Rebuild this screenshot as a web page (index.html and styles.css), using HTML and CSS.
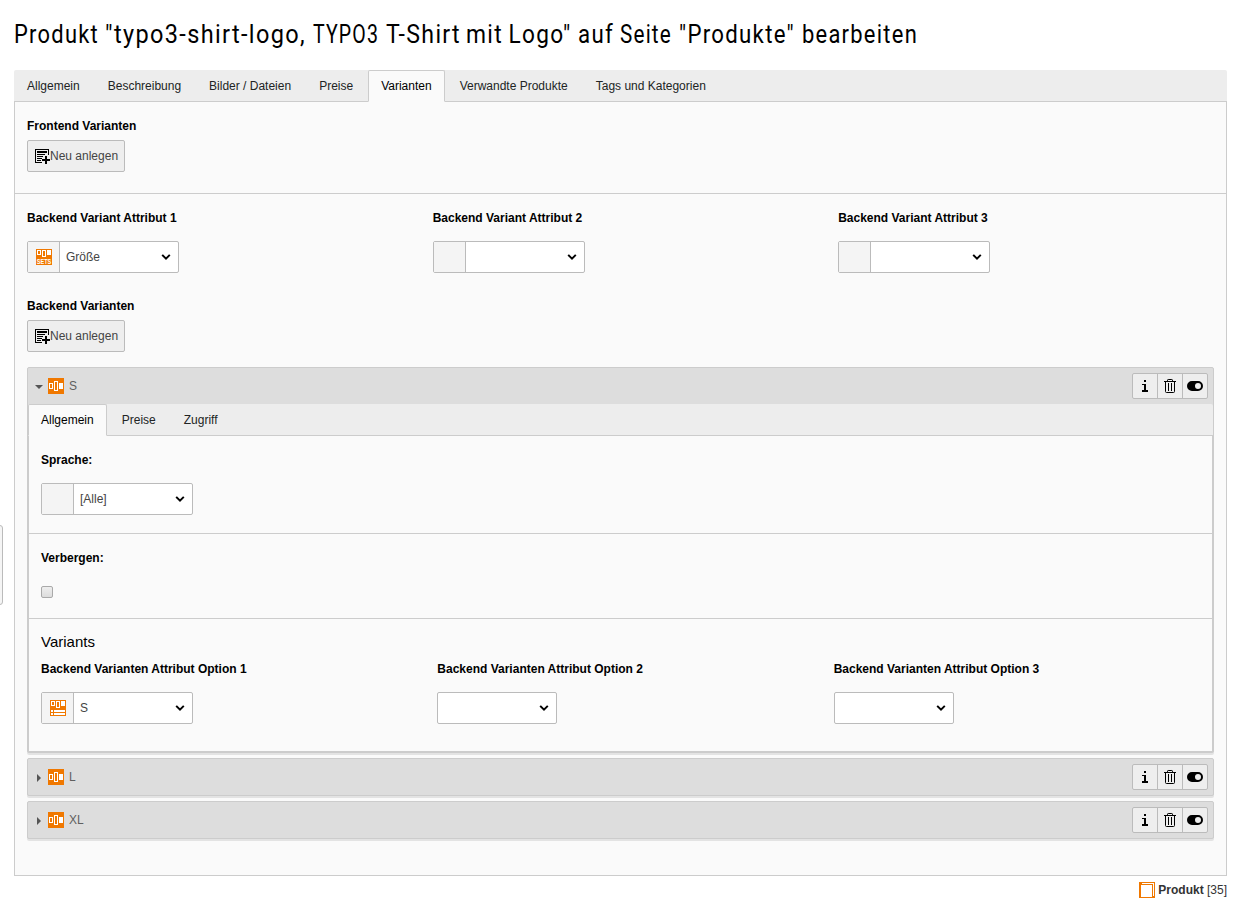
FILE: index.html
```html
<!DOCTYPE html>
<html lang="de">
<head>
<meta charset="utf-8">
<title>Produkt bearbeiten</title>
<link rel="stylesheet" href="styles.css">
</head>
<body>
<svg class="defs" width="0" height="0">
  <symbol id="new" viewBox="0 0 16 16" shape-rendering="crispEdges">
    <path d="M1 1h14v6h-1V2H2v12h6v1H1z"/>
    <path d="M3 3h10v2H3zM3 6h8v1H3zM3 8h6v1H3zM3 10h5v1H3zM3 12h4v1H3z"/>
    <path d="M11 8h2v3h3v2h-3v3h-2v-3H8v-2h3z"/>
  </symbol>
  <symbol id="variant" viewBox="0 0 16 16" shape-rendering="crispEdges">
    <path fill="#f07800" d="M0 0h16v16H0z"/>
    <path fill="#fff" fill-rule="evenodd" d="M1 5h4v6H1zM2 6v4h2V6zM6 3h4v10H6zM7 4v8h2V4zM11 5h4v6h-4z"/>
  </symbol>
  <symbol id="sets" viewBox="0 0 16 16">
    <path fill="#f07800" d="M0 0h16v16H0z"/>
    <path fill="#fff" fill-rule="evenodd" shape-rendering="crispEdges" d="M1 1h4v5H1zM2 2v3h2V2zM6 1h4v7H6zM7 2v5h2V2zM11 1h4v5h-4z"/>
    <text x="0.800" y="15" textLength="14.400" lengthAdjust="spacingAndGlyphs" class="sets-text">SETS</text>
  </symbol>
  <symbol id="option" viewBox="0 0 16 16" shape-rendering="crispEdges">
    <path fill="#f07800" d="M0 0h16v16H0z"/>
    <path fill="#fff" fill-rule="evenodd" d="M1 1h4v5H1zM2 2v3h2V2zM6 1h4v7H6zM7 2v5h2V2zM11 1h4v5h-4zM1 10h2v2H1zM4 10h11v2H4zM1 13h2v2H1zM4 13h11v2H4z"/>
  </symbol>
  <symbol id="info" viewBox="0 0 16 16" shape-rendering="crispEdges">
    <path d="M7 2h2v2H7zM6 6h3v6h2v2H5v-2h2V7H5V6z"/>
  </symbol>
  <symbol id="trash" viewBox="0 0 16 16">
    <path fill="none" stroke="#000" d="M2 3.5h12M5.5 3V2.2q0-.7.7-.7h3.6q.7 0 .7.7V3M3.500 4v9.500q0 1 1 1h7q1 0 1-1V4M6.500 5v8M9.500 5v8"/>
  </symbol>
  <symbol id="toggle" viewBox="0 0 16 16">
    <path fill-rule="evenodd" d="M5 3h6a5 5 0 0 1 0 10H5A5 5 0 0 1 5 3zm6 2a3 3 0 1 0 0 6 3 3 0 0 0 0-6z"/>
  </symbol>
  <symbol id="arrow" viewBox="0 0 10 8">
    <path fill="none" stroke="#000" stroke-width="2" d="M1.200 1.900 5 5.600 8.800 1.900"/>
  </symbol>
</svg>

<div class="handle"></div>

<h1 class="title">
  <svg class="title-svg" width="920" height="40">
    <text y="29" x="0" textLength="85" lengthAdjust="spacingAndGlyphs">Produkt</text>
    <text y="29" x="91" textLength="201" lengthAdjust="spacingAndGlyphs">"typo3-shirt-logo,</text>
    <text y="29" x="299" textLength="66" lengthAdjust="spacingAndGlyphs">TYPO3</text>
    <text y="29" x="372" textLength="75" lengthAdjust="spacingAndGlyphs">T-Shirt</text>
    <text y="29" x="452" textLength="37" lengthAdjust="spacingAndGlyphs">mit</text>
    <text y="29" x="494.500" textLength="63" lengthAdjust="spacingAndGlyphs">Logo"</text>
    <text y="29" x="564" textLength="36" lengthAdjust="spacingAndGlyphs">auf</text>
    <text y="29" x="606" textLength="52" lengthAdjust="spacingAndGlyphs">Seite</text>
    <text y="29" x="665" textLength="116" lengthAdjust="spacingAndGlyphs">"Produkte"</text>
    <text y="29" x="788" textLength="116" lengthAdjust="spacingAndGlyphs">bearbeiten</text>
  </svg>
</h1>

<nav class="tabs">
  <a class="tab">Allgemein</a><a class="tab">Beschreibung</a><a class="tab">Bilder / Dateien</a><a class="tab">Preise</a><a class="tab active">Varianten</a><a class="tab">Verwandte Produkte</a><a class="tab">Tags und Kategorien</a>
</nav>
<main class="pane outer">
  <section class="section frontend">
    <div class="label">Frontend Varianten</div>
    <button class="btn"><svg class="icon"><use href="#new"/></svg>Neu anlegen</button>
  </section>
  <section class="section">
    <div class="columns">
      <div><div class="label">Backend Variant Attribut 1</div>
        <div class="select"><span class="addon"><svg class="icon"><use href="#sets"/></svg></span><span class="value">Größe<svg class="arrow"><use href="#arrow"/></svg></span></div></div>
      <div><div class="label">Backend Variant Attribut 2</div>
        <div class="select"><span class="addon"></span><span class="value"><svg class="arrow"><use href="#arrow"/></svg></span></div></div>
      <div><div class="label">Backend Variant Attribut 3</div>
        <div class="select"><span class="addon"></span><span class="value"><svg class="arrow"><use href="#arrow"/></svg></span></div></div>
    </div>
    <div class="label backend">Backend Varianten</div>
    <button class="btn"><svg class="icon"><use href="#new"/></svg>Neu anlegen</button>

    <div class="panels">
      <article class="panel">
        <header class="panel-head"><i class="caret open"></i><svg class="icon"><use href="#variant"/></svg><span class="name">S</span>
          <div class="actions"><a><svg class="icon"><use href="#info"/></svg></a><a><svg class="icon"><use href="#trash"/></svg></a><a><svg class="icon"><use href="#toggle"/></svg></a></div></header>
        <nav class="tabs"><a class="tab active">Allgemein</a><a class="tab">Preise</a><a class="tab">Zugriff</a></nav>
        <div class="pane inner">
          <div class="section language">
            <div class="label">Sprache:</div>
            <div class="select"><span class="addon"></span><span class="value">[Alle]<svg class="arrow"><use href="#arrow"/></svg></span></div>
          </div>
          <div class="section hide">
            <div class="label">Verbergen:</div>
            <span class="checkbox"></span>
          </div>
          <div class="section variants">
            <h4 class="subtitle">Variants</h4>
            <div class="columns narrow">
              <div><div class="label">Backend Varianten Attribut Option 1</div>
                <div class="select"><span class="addon"><svg class="icon"><use href="#option"/></svg></span><span class="value">S<svg class="arrow"><use href="#arrow"/></svg></span></div></div>
              <div><div class="label">Backend Varianten Attribut Option 2</div>
                <div class="select plain"><span class="value"><svg class="arrow"><use href="#arrow"/></svg></span></div></div>
              <div><div class="label">Backend Varianten Attribut Option 3</div>
                <div class="select plain"><span class="value"><svg class="arrow"><use href="#arrow"/></svg></span></div></div>
            </div>
          </div>
        </div>
      </article>
      <article class="panel">
        <header class="panel-head"><i class="caret"></i><svg class="icon"><use href="#variant"/></svg><span class="name">L</span>
          <div class="actions"><a><svg class="icon"><use href="#info"/></svg></a><a><svg class="icon"><use href="#trash"/></svg></a><a><svg class="icon"><use href="#toggle"/></svg></a></div></header>
      </article>
      <article class="panel">
        <header class="panel-head"><i class="caret"></i><svg class="icon"><use href="#variant"/></svg><span class="name">XL</span>
          <div class="actions"><a><svg class="icon"><use href="#info"/></svg></a><a><svg class="icon"><use href="#trash"/></svg></a><a><svg class="icon"><use href="#toggle"/></svg></a></div></header>
      </article>
    </div>
  </section>
</main>
<footer class="footer">
  <svg class="icon" viewBox="0 0 16 16" shape-rendering="crispEdges"><path fill="#f07800" d="M0 0h16v16H0z"/><path fill="#fff" d="M2 3h11v12H2zM3 1h12v1H3zM14 2h1v12h-1z"/></svg>
  <span><b>Produkt</b> [35]</span>
</footer>
</body>
</html>
```
FILE: styles.css
```css
* { box-sizing: border-box; }
body {
  margin: 0;
  padding: 14px 13px 0 14px;
  height: 909px;
  overflow: hidden;
  background: #fff;
  color: #212424;
  font: 12px/18px "Liberation Sans", Arial, sans-serif;
}
.defs { position: absolute; }
.handle {
  position: absolute;
  left: -10px;
  top: 525px;
  width: 13px;
  height: 80px;
  border: 1px solid #bbb;
  border-radius: 3px;
  background: #f5f5f5;
}
.title { margin: 0; height: 56px; font-weight: 400; }
.title-svg { display: block; overflow: visible; }
.title-svg text { font: 26px Roboto, sans-serif; letter-spacing: 1.5px; fill: #000; }
.icon { display: block; flex: none; width: 16px; height: 16px; }
.sets-text { font: bold 7.5px "Liberation Sans", sans-serif; fill: #fff; }

.tabs {
  display: flex;
  height: 32px;
  background: #ededed;
  border-bottom: 1px solid #ccc;
  border-radius: 2px 2px 0 0;
}
.tab {
  height: 32px;
  margin-right: 2px;
  padding: 6px 12px;
  border: 1px solid transparent;
  white-space: nowrap;
}
.tab.active {
  background: #fafafa;
  border-color: #ccc #ccc #fafafa;
  border-radius: 2px 2px 0 0;
  color: #000;
}
.pane { background: #fafafa; border: 1px solid #ccc; border-top: 0; }
.outer { height: 774px; }
.section { padding: 15px 12px 0; }
.section + .section { border-top: 1px solid #ccc; }
.frontend { height: 91px; }
.label { font-weight: 700; color: #000; margin-bottom: 5px; }
.btn {
  display: flex;
  align-items: center;
  width: 98px;
  height: 32px;
  padding: 0 0 0 6px;
  margin: 0;
  border: 1px solid #bbb;
  border-radius: 2px;
  background: #eee;
  color: #444;
  font: inherit;
  white-space: nowrap;
}
.columns { display: grid; grid-template-columns: 405.67px 405.5px 1fr; }
.columns.narrow { grid-template-columns: 396.33px 396.33px 1fr; }
.select {
  display: flex;
  width: 152px;
  height: 32px;
  margin-top: 14px;
  border: 1px solid #bbb;
  border-radius: 2px;
  background: #fff;
  color: #444;
}
.select.plain { width: 120px; }
.addon {
  display: flex;
  align-items: center;
  justify-content: center;
  width: 32px;
  background: #f4f4f4;
  border-right: 1px solid #bbb;
}
.value {
  flex: 1;
  display: flex;
  align-items: center;
  padding: 0 7px 0 6px;
}
.arrow { width: 10px; height: 8px; margin-left: auto; }
.backend { margin-top: 24px; }

.panels { display: grid; gap: 5px; margin-top: 15px; }
.panel {
  border: 1px solid #ccc;
  border-radius: 2px;
  background: #ddd;
  box-shadow: 0 2px 0 #e3e3e3;
}
.panel-head {
  display: flex;
  align-items: center;
  height: 36px;
  padding: 0 5px 0 7px;
  color: #5f5f5f;
}
.name { margin-left: 5px; }
.caret {
  width: 8px;
  margin: 2px 5px 0 0;
}
.caret::before {
  content: "";
  display: block;
  width: 0;
  margin-left: 2px;
  border: 4px solid transparent;
  border-left-color: #555;
  border-right-width: 0;
}
.caret.open::before {
  margin-left: 0;
  border: 4px solid transparent;
  border-top-color: #555;
  border-bottom-width: 0;
}
.actions {
  display: flex;
  margin-left: auto;
  border: 1px solid #bbb;
  border-radius: 2px;
  background: #eee;
}
.actions a { padding: 4px; height: 24px; }
.actions a + a { border-left: 1px solid #bbb; }
.inner { height: 316px; }
.language { height: 97px; }
.hide { height: 85px; }
.section.variants { padding-top: 14px; }
.checkbox {
  display: block;
  width: 12px;
  height: 12px;
  margin-top: 19px;
  border: 1px solid #a9a9a9;
  border-radius: 2px;
  background: linear-gradient(#eee, #dcdcdc);
}
.subtitle { margin: 0 0 9px; color: #000; font-size: 15px; font-weight: 400; line-height: 18px; }
.footer {
  display: flex;
  align-items: center;
  justify-content: flex-end;
  gap: 3px;
  margin-top: 5px;
  color: #333;
}
```
